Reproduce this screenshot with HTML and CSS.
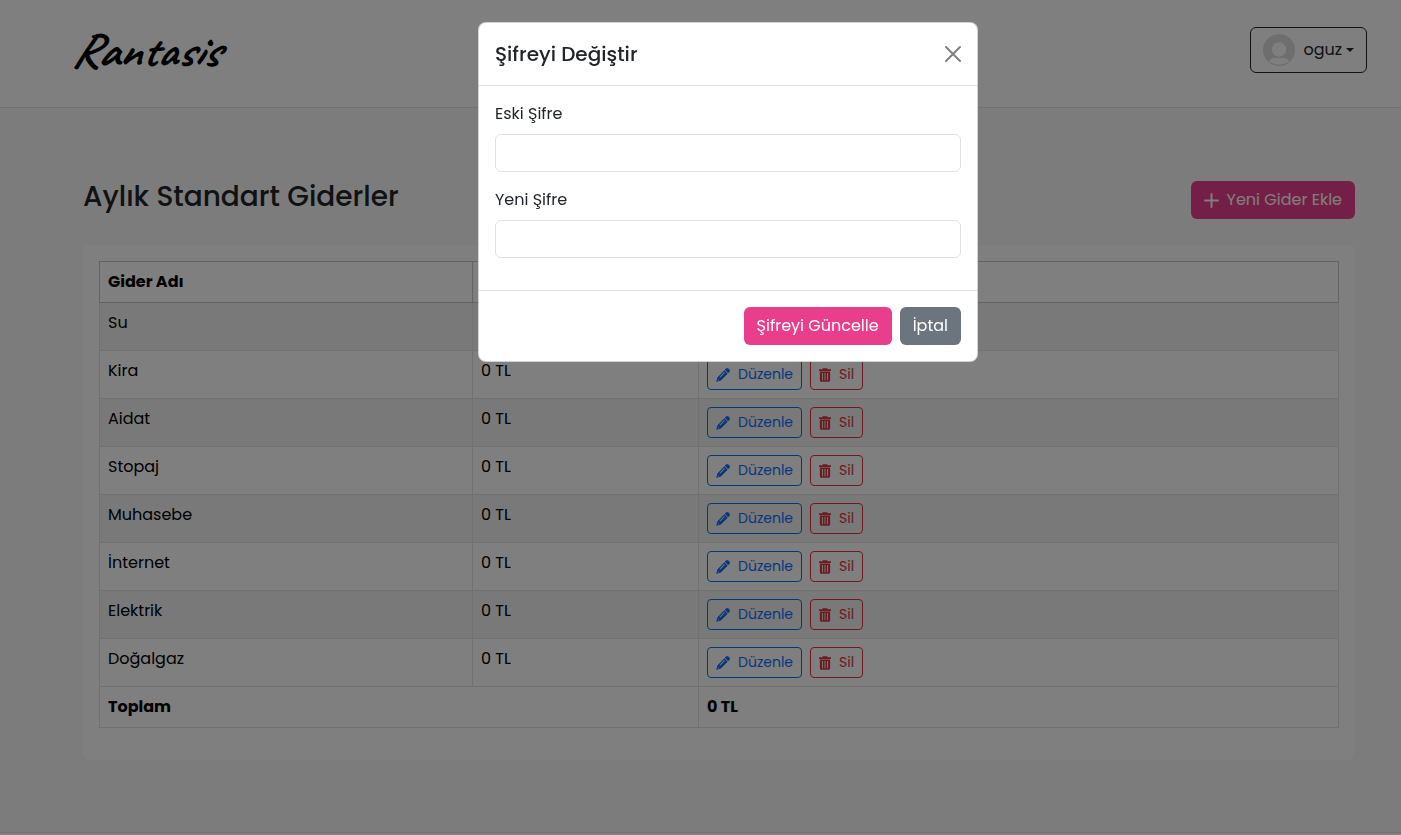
FILE: index.html
```html
<!DOCTYPE html>
<html lang="tr">
<head>
    <meta charset="UTF-8">
    <meta name="viewport" content="width=device-width, initial-scale=1.0">
    <title>Rantasis - Aylık Standart Giderler</title>
    <link rel="stylesheet" href="styles.css">
</head>
<body class="modal-open">
    <!-- İkonlar -->
    <svg class="icon-defs" aria-hidden="true">
        <symbol id="icon-pencil" viewBox="0 0 16 16">
            <path d="M11.4 .7a2 2 0 0 1 2.800 0l1.100 1.100a2 2 0 0 1 0 2.800l-1.300 1.300-3.900-3.900z"/>
            <path fill-rule="evenodd" d="M9.500 2.600 13.400 6.500 5.200 14.500 .3 15.700 1.500 10.800zM9.500 4.700 4 10.200l.7.700 5.500-5.500zM2.300 12.500l-.5 1.700 1.700-.4z"/>
        </symbol>
        <symbol id="icon-trash" viewBox="0 0 14 16">
            <path d="M4.500 0h5l.7 1.200H14v2H0v-2h3.800z"/>
            <path fill-rule="evenodd" d="M1 4h12v10.200a1.800 1.800 0 0 1-1.800 1.800H2.800A1.800 1.800 0 0 1 1 14.200zM3.600 5.800v8.200h1V5.800zm2.900 0v8.200h1V5.800zm2.900 0v8.200h1V5.800z"/>
        </symbol>
    </svg>

    <header class="header">
        <a href="#" class="logo">Rantasis</a>
        <button type="button" class="btn btn-user">
            <svg class="avatar" viewBox="0 0 32 32" aria-hidden="true">
                <circle cx="16" cy="16" r="16" fill="#dcdcdc"/>
                <circle cx="16" cy="15.500" r="7.200" fill="#fff"/>
                <path d="M6 27.500Q7 24 12 24H20Q25 24 26 27.500Q16 34 6 27.500Z" fill="#fff"/>
            </svg>
            <span>oguz</span>
            <span class="caret"></span>
        </button>
    </header>

    <main class="main">
        <div class="page-head">
            <h1 class="page-title">Aylık Standart Giderler</h1>
            <button type="button" class="btn btn-pink">
                <svg class="icon-plus" viewBox="0 0 15 15" aria-hidden="true"><path d="M7.500 1V14M1 7.500H14"/></svg>
                Yeni Gider Ekle
            </button>
        </div>

        <div class="card">
            <table class="table">
                <colgroup>
                    <col class="col-name">
                    <col class="col-amount">
                    <col>
                </colgroup>
                <thead>
                    <tr>
                        <th>Gider Adı</th>
                        <th>Tutar</th>
                        <th>İşlemler</th>
                    </tr>
                </thead>
                <tbody id="giderler"></tbody>
                <tfoot>
                    <tr>
                        <th colspan="2">Toplam</th>
                        <th>0 TL</th>
                    </tr>
                </tfoot>
            </table>
        </div>
    </main>

    <footer class="footer"></footer>

    <div class="modal-backdrop"></div>
    <div class="modal" role="dialog" aria-modal="true" aria-labelledby="modalTitle">
        <form class="modal-content">
            <div class="modal-header">
                <h2 class="modal-title" id="modalTitle">Şifreyi Değiştir</h2>
                <button type="button" class="btn-close" aria-label="Kapat">
                    <svg viewBox="0 0 16 16" aria-hidden="true"><path d="M1 1 15 15M15 1 1 15"/></svg>
                </button>
            </div>
            <div class="modal-body">
                <div class="form-group">
                    <label for="eskiSifre">Eski Şifre</label>
                    <input type="password" id="eskiSifre" class="form-control">
                </div>
                <div class="form-group">
                    <label for="yeniSifre">Yeni Şifre</label>
                    <input type="password" id="yeniSifre" class="form-control">
                </div>
            </div>
            <div class="modal-footer">
                <button type="submit" class="btn btn-pink">Şifreyi Güncelle</button>
                <button type="button" class="btn btn-gray">İptal</button>
            </div>
        </form>
    </div>

    <script src="script.js"></script>
</body>
</html>
```

FILE: styles.css
```css
:root {
    --pink: #e83e8c;
    --gray: #6c757d;
    --blue: #0d6efd;
    --red: #dc3545;
    --text-color: #212529;
    --border-color: #dee2e6;
}

* {
    margin: 0;
    padding: 0;
    box-sizing: border-box;
}

body {
    font-family: 'Poppins', 'Inter', sans-serif;
    font-size: 16px;
    line-height: 24px;
    color: var(--text-color);
    background-color: #f8f8f8;
}

body.modal-open {
    height: 100vh;
    overflow: hidden;
}

.icon-defs {
    display: none;
}

/* Butonlar */
.btn {
    display: inline-flex;
    align-items: center;
    padding: 6px 12px;
    border: 1px solid transparent;
    border-radius: 6px;
    background-color: transparent;
    font: inherit;
    white-space: nowrap;
    cursor: pointer;
}

.btn-pink {
    background-color: var(--pink);
    color: white;
}

.btn-gray {
    background-color: var(--gray);
    color: white;
}

.btn-user {
    border-color: var(--text-color);
    color: var(--text-color);
}

.btn-sm {
    gap: 8px;
    padding: 4px 8px;
    border-radius: 4px;
    font-size: 14px;
    line-height: 21px;
}

.btn-sm svg {
    width: 14px;
    height: 14px;
    fill: currentColor;
}

.btn-edit {
    border-color: var(--blue);
    color: var(--blue);
}

.btn-delete {
    border-color: var(--red);
    color: var(--red);
}

.btn-delete svg {
    width: 12px;
}

/* Üst kısım */
.header {
    display: flex;
    justify-content: space-between;
    align-items: center;
    min-height: 108px;
    padding: 0 34px 8px 71px;
    background-color: white;
    border-bottom: 1px solid var(--border-color);
}

.logo {
    font-family: 'Caveat', 'Dancing Script', 'Lato', cursive;
    font-size: 48px;
    line-height: 56px;
    font-weight: 600;
    font-style: italic;
    color: black;
    text-decoration: none;
}

.avatar {
    width: 32px;
    height: 32px;
    margin-right: 8px;
}

.caret {
    margin-left: 4px;
    border-top: 4px solid;
    border-left: 4px solid transparent;
    border-right: 4px solid transparent;
}

/* İçerik */
.main {
    padding: 73px 46px 72px 83px;
}

.page-head {
    display: flex;
    justify-content: space-between;
    margin-bottom: 26px;
}

.page-title {
    font-size: 28px;
    line-height: 32px;
    font-weight: 500;
}

.icon-plus {
    width: 15px;
    height: 15px;
    margin-right: 8px;
    fill: none;
    stroke: currentColor;
    stroke-width: 2;
    stroke-linecap: round;
}

.card {
    padding: 16px 16px 32px;
    border-radius: 6px;
    background-color: white;
}

.table {
    width: 100%;
    table-layout: fixed;
    border-collapse: collapse;
    color: black;
    text-align: left;
}

.table th,
.table td {
    padding: 8px;
    border: 1px solid var(--border-color);
    vertical-align: top;
}

.table thead th {
    border-color: #c6c7c8;
}

.table tbody tr:nth-child(odd) {
    background-color: #f2f2f2;
}

.col-name {
    width: 30.1%;
}

.col-amount {
    width: 18.25%;
}

.actions {
    display: flex;
    gap: 8px;
}

.footer {
    min-height: 60px;
    background-color: white;
    border-top: 1px solid var(--border-color);
}

/* Şifre penceresi */
.modal-backdrop {
    position: fixed;
    inset: 0;
    background-color: rgba(0, 0, 0, 0.5);
}

.modal {
    position: fixed;
    inset: 0;
    padding: 22px 0 22px 55px;
    overflow: auto;
}

.modal-content {
    max-width: 500px;
    margin: 0 auto;
    border: 1px solid rgba(0, 0, 0, 0.175);
    border-radius: 8px;
    background-color: white;
}

.modal-header {
    display: flex;
    justify-content: space-between;
    align-items: center;
    padding: 16px;
    border-bottom: 1px solid var(--border-color);
}

.modal-title {
    font-size: 20px;
    line-height: 30px;
    font-weight: 500;
}

.btn-close {
    width: 16px;
    height: 16px;
    border: none;
    background: none;
    cursor: pointer;
}

.btn-close svg {
    display: block;
    width: 16px;
    height: 16px;
    stroke: #808080;
    stroke-width: 2;
    stroke-linecap: round;
}

.modal-body {
    padding: 16px;
}

.form-group {
    display: flex;
    flex-direction: column;
    gap: 8px;
    margin-bottom: 16px;
}

.form-control {
    width: 100%;
    height: 38px;
    padding: 6px 12px;
    border: 1px solid var(--border-color);
    border-radius: 6px;
    background-color: white;
    font: inherit;
}

.modal-footer {
    display: flex;
    justify-content: flex-end;
    gap: 8px;
    padding: 16px;
    border-top: 1px solid var(--border-color);
}
```

FILE: script.js
```js
const giderler = ['Su', 'Kira', 'Aidat', 'Stopaj', 'Muhasebe', 'İnternet', 'Elektrik', 'Doğalgaz'];

document.getElementById('giderler').innerHTML = giderler.map(ad => `
    <tr>
        <td>${ad}</td>
        <td>0 TL</td>
        <td>
            <div class="actions">
                <button type="button" class="btn btn-sm btn-edit"><svg aria-hidden="true"><use href="#icon-pencil"/></svg>Düzenle</button>
                <button type="button" class="btn btn-sm btn-delete"><svg aria-hidden="true"><use href="#icon-trash"/></svg>Sil</button>
            </div>
        </td>
    </tr>
`).join('');
```
